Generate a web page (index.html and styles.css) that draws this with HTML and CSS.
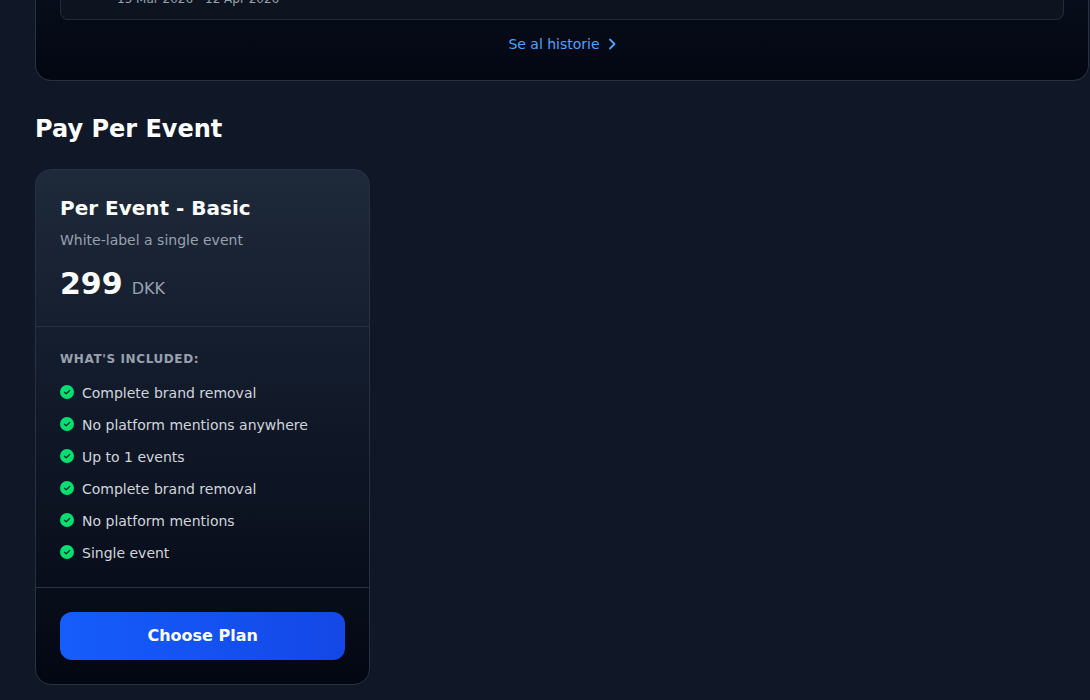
FILE: index.html
```html
<!DOCTYPE html>
<html lang="da">
<head>
<meta charset="utf-8">
<meta name="viewport" content="width=device-width, initial-scale=1">
<title>Pay Per Event</title>
<link rel="stylesheet" href="styles.css">
</head>
<body>
<svg class="sprite" aria-hidden="true">
  <symbol id="check" viewBox="0 0 14 14">
    <circle cx="7" cy="7" r="7" fill="currentColor"/>
    <path d="M4.500 7.200l1.700 1.600 3.400-3.300" fill="none" stroke="#0d2a2b" stroke-width="1.200" stroke-linecap="round" stroke-linejoin="round"/>
  </symbol>
</svg>
<main class="page">
  <section class="history">
    <div class="history-item">
      <p class="history-date">15 Mar 2026 - 12 Apr 2026</p>
    </div>
    <a class="history-link" href="#">Se al historie
      <svg class="chevron" viewBox="0 0 8 14" aria-hidden="true"><path d="M2 2.500L6.500 7l-4.500 4.500" fill="none" stroke="currentColor" stroke-width="1.800" stroke-linecap="round" stroke-linejoin="round"/></svg>
    </a>
  </section>

  <h2 class="section-title">Pay Per Event</h2>

  <div class="plans">
    <article class="plan">
      <header class="plan-head">
        <h3 class="plan-name">Per Event - Basic</h3>
        <p class="plan-desc">White-label a single event</p>
        <p class="plan-price"><span class="amount">299</span><span class="currency">DKK</span></p>
      </header>
      <div class="plan-body">
        <h4 class="included">What's included:</h4>
        <ul class="features">
          <li class="feature"><svg class="check"><use href="#check"/></svg>Complete brand removal</li>
          <li class="feature"><svg class="check"><use href="#check"/></svg>No platform mentions anywhere</li>
          <li class="feature"><svg class="check"><use href="#check"/></svg>Up to 1 events</li>
          <li class="feature"><svg class="check"><use href="#check"/></svg>Complete brand removal</li>
          <li class="feature"><svg class="check"><use href="#check"/></svg>No platform mentions</li>
          <li class="feature"><svg class="check"><use href="#check"/></svg>Single event</li>
        </ul>
      </div>
      <footer class="plan-foot">
        <button class="choose" type="button">Choose Plan</button>
      </footer>
    </article>
  </div>
</main>
</body>
</html>
```
FILE: styles.css
```css
* { box-sizing: border-box; margin: 0; padding: 0; }

body {
  background: #101828;
  color: #fff;
  font-family: "DejaVu Sans", sans-serif;
  font-size: 14px;
  line-height: 20px;
}

.sprite { display: none; }

.page {
  margin-top: -65px;
  padding: 0 1px 16px 35px;
}

.history {
  display: flex;
  flex-direction: column;
  gap: 12px;
  padding: 24px;
  border: 1px solid #273142;
  border-top: 0;
  border-radius: 0 0 16px 16px;
  background: linear-gradient(#0a1120, #030712);
}

.history-item {
  padding: 32px 16px 12px 56px;
  border: 1px solid #232c3b;
  border-top: 0;
  border-radius: 0 0 8px 8px;
  background: #0d1420;
}

.history-date {
  color: #99a1af;
  font-size: 12px;
  line-height: 16px;
}

.history-link {
  display: flex;
  align-items: center;
  align-self: center;
  gap: 8px;
  color: #51a2ff;
  line-height: 24px;
  text-decoration: none;
}

.chevron { width: 8px; height: 14px; }

.section-title {
  margin: 32px 0 24px;
  font-size: 24px;
  line-height: 32px;
}

.plans {
  display: grid;
  grid-template-columns: repeat(3, 1fr);
  gap: 24px;
}

.plan {
  border: 1px solid #273142;
  border-radius: 16px;
  background: linear-gradient(#1e2939, #101828 50%, #030712) border-box;
}

.plan-head, .plan-body { padding: 24px; border-bottom: 1px solid #273142; }
.plan-foot { padding: 24px; }

.plan-name { font-size: 20px; line-height: 28px; }

.plan-desc { margin-top: 8px; color: #99a1af; }

.plan-price {
  display: flex;
  align-items: baseline;
  gap: 9px;
  margin-top: 16px;
}

.amount { font-size: 30px; font-weight: 700; line-height: 36px; }
.currency { color: #99a1af; font-size: 16px; line-height: 24px; }

.included {
  margin-bottom: 16px;
  color: #99a1af;
  font-size: 12px;
  letter-spacing: 0.05em;
  line-height: 16px;
  text-transform: uppercase;
}

.features { display: grid; gap: 12px; list-style: none; }

.feature { display: flex; gap: 8px; color: #d1d5dc; }

.check {
  flex: none;
  width: 14px;
  height: 14px;
  margin-top: 2px;
  color: #05df72;
}

.choose {
  width: 100%;
  padding: 12px 24px;
  border: 0;
  border-radius: 12px;
  background: linear-gradient(90deg, #155dfc, #1447e6);
  color: #fff;
  font: 700 16px/24px "DejaVu Sans", sans-serif;
  cursor: pointer;
}
```
